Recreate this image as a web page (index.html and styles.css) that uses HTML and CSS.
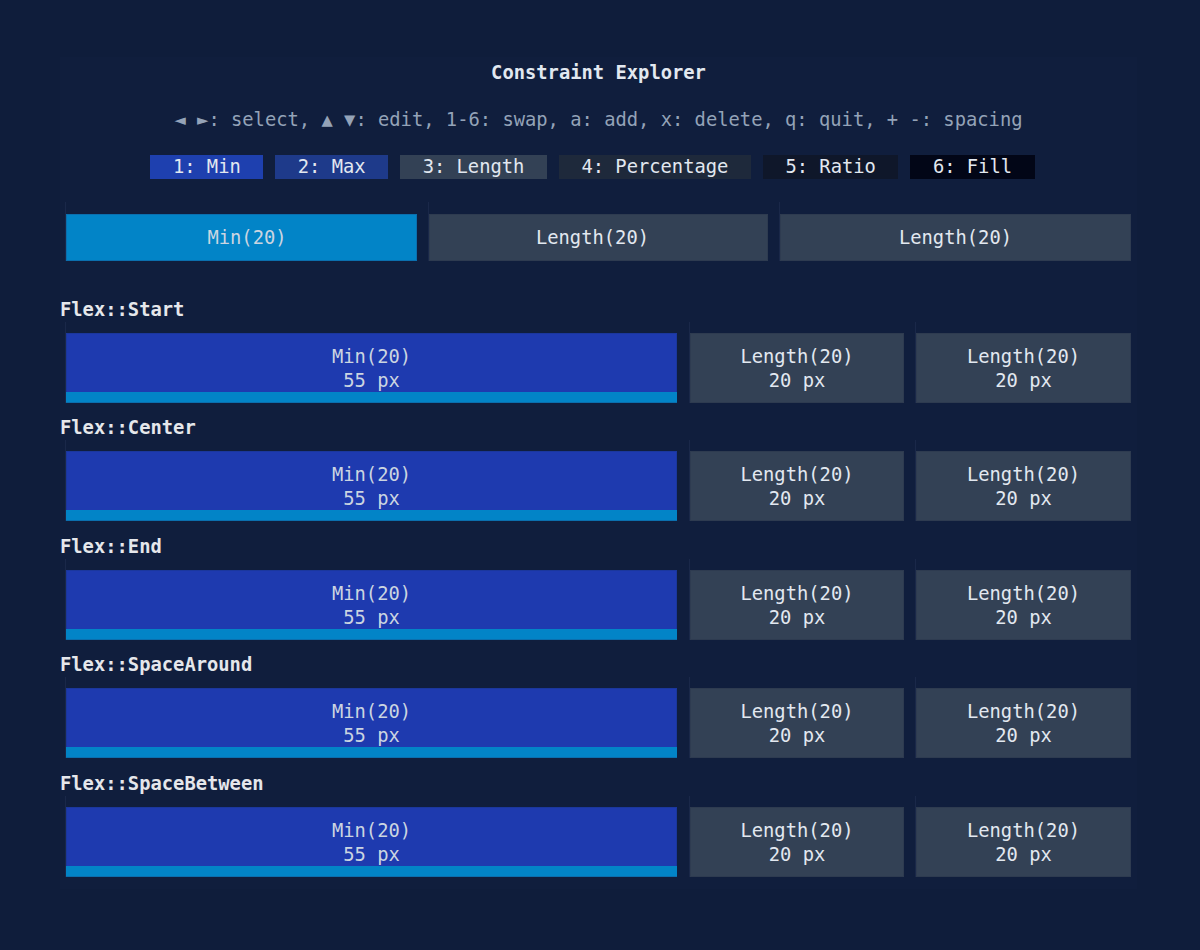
FILE: index.html
```html
<!DOCTYPE html>
<html lang="en">
<head>
<meta charset="utf-8">
<title>Constraint Explorer</title>
<link rel="stylesheet" href="styles.css">
</head>
<body>
<div class="panel">
  <div class="title">Constraint Explorer</div>
  <div class="help">◄ ►: select, ▲ ▼: edit, 1-6: swap, a: add, x: delete, q: quit, + -: spacing</div>
  <div class="badges">
    <span class="badge b-min">1: Min</span>
    <span class="badge b-max">2: Max</span>
    <span class="badge b-len">3: Length</span>
    <span class="badge b-pct">4: Percentage</span>
    <span class="badge b-ratio">5: Ratio</span>
    <span class="badge b-fill">6: Fill</span>
  </div>

  <div class="tabs">
    <div class="cell c-wide"><div class="tab tab-sel">Min(20)</div></div>
    <div class="cell c-mid"><div class="tab tab-mid">Length(20)</div></div>
    <div class="cell c-wide"><div class="tab">Length(20)</div></div>
  </div>

  <div class="flexes">
    <section class="flex-sec">
      <div class="label">Flex::Start</div>
      <div class="row">
        <div class="cell r-big"><div class="blk blk-min"><span>Min(20)</span><span>55 px</span><i class="strip"></i></div></div>
        <div class="cell r-a"><div class="blk blk-len"><span>Length(20)</span><span>20 px</span></div></div>
        <div class="cell r-b"><div class="blk blk-len"><span>Length(20)</span><span>20 px</span></div></div>
      </div>
    </section>
    <section class="flex-sec">
      <div class="label">Flex::Center</div>
      <div class="row">
        <div class="cell r-big"><div class="blk blk-min"><span>Min(20)</span><span>55 px</span><i class="strip"></i></div></div>
        <div class="cell r-a"><div class="blk blk-len"><span>Length(20)</span><span>20 px</span></div></div>
        <div class="cell r-b"><div class="blk blk-len"><span>Length(20)</span><span>20 px</span></div></div>
      </div>
    </section>
    <section class="flex-sec">
      <div class="label">Flex::End</div>
      <div class="row">
        <div class="cell r-big"><div class="blk blk-min"><span>Min(20)</span><span>55 px</span><i class="strip"></i></div></div>
        <div class="cell r-a"><div class="blk blk-len"><span>Length(20)</span><span>20 px</span></div></div>
        <div class="cell r-b"><div class="blk blk-len"><span>Length(20)</span><span>20 px</span></div></div>
      </div>
    </section>
    <section class="flex-sec">
      <div class="label">Flex::SpaceAround</div>
      <div class="row">
        <div class="cell r-big"><div class="blk blk-min"><span>Min(20)</span><span>55 px</span><i class="strip"></i></div></div>
        <div class="cell r-a"><div class="blk blk-len"><span>Length(20)</span><span>20 px</span></div></div>
        <div class="cell r-b"><div class="blk blk-len"><span>Length(20)</span><span>20 px</span></div></div>
      </div>
    </section>
    <section class="flex-sec">
      <div class="label">Flex::SpaceBetween</div>
      <div class="row">
        <div class="cell r-big"><div class="blk blk-min"><span>Min(20)</span><span>55 px</span><i class="strip"></i></div></div>
        <div class="cell r-a"><div class="blk blk-len"><span>Length(20)</span><span>20 px</span></div></div>
        <div class="cell r-b"><div class="blk blk-len"><span>Length(20)</span><span>20 px</span></div></div>
      </div>
    </section>
  </div>
</div>
</body>
</html>
```

FILE: styles.css
```css
html, body {
  margin: 0;
  padding: 0;
  background: #0f1d3b;
}

body {
  font-family: "DejaVu Sans Mono", "Liberation Mono", monospace;
  font-size: 18.8px;
  line-height: 24px;
  color: #e2e8f0;
  height: 950px;
}

.panel {
  margin: 57px 0 0 60px;
  width: 1077px;
  padding: 4px 0 12px 0;
  background: #101e3d;
  display: flex;
  flex-direction: column;
}

.title {
  text-align: center;
  font-weight: bold;
  height: 24px;
  color: #e2e8f0;
}

.help {
  margin-top: 23px;
  text-align: center;
  color: #94a3b8;
  height: 24px;
}

.badges {
  margin-top: 23px;
  display: flex;
  justify-content: center;
  padding-right: 12px;
  gap: 12px;
}

.badge {
  display: block;
  height: 23.5px;
  line-height: 23.5px;
  padding: 0 22.5px;
  color: #e2e8f0;
}

.b-min { background: #1e40af; }
.b-max { background: #1e3a8a; }
.b-len { background: #334155; }
.b-pct { background: #1e293b; }
.b-ratio { background: #0f172a; }
.b-fill { background: #020617; }

.tabs {
  margin: 23px 0 0 5px;
  display: flex;
  gap: 11px;
}

.cell {
  border-left: 1px solid #1a2849;
  padding-top: 12px;
  box-sizing: border-box;
}

.c-wide { width: 352px; }
.c-mid { width: 340px; }

.tab {
  height: 47px;
  line-height: 47px;
  text-align: center;
  background: #334155;
  color: #e2e8f0;
  box-shadow: inset 0 0 0 1px #2e3b50;
}

.tab-sel {
  background: #0284c7;
  color: #cbd5e1;
  box-shadow: inset 0 0 0 1px #0b6fae;
  padding-left: 11px;
}

.tab-mid {
  padding-right: 12px;
}

.flexes {
  margin-top: 37px;
  display: flex;
  flex-direction: column;
  gap: 13.6px;
}

.label {
  font-weight: bold;
  height: 24px;
  color: #e5e7eb;
}

.row {
  margin-left: 5px;
  display: flex;
}

.row .cell { padding-top: 11px; }

.r-big { width: 612px; margin-right: 12px; }
.r-a { width: 215px; margin-right: 11px; }
.r-b { width: 216px; }

.blk {
  position: relative;
  height: 70px;
  box-sizing: border-box;
  padding-top: 12px;
  display: flex;
  flex-direction: column;
  align-items: center;
}

.blk span {
  display: block;
  height: 24px;
  line-height: 24px;
  position: relative;
  z-index: 1;
}

.blk-min {
  background: #1e3aaf;
  color: #cbd5e1;
  box-shadow: inset 0 0 0 1px #1b379d;
}

.blk-len {
  background: #334155;
  color: #e2e8f0;
  box-shadow: inset 0 0 0 1px #2e3b50;
}

.strip {
  position: absolute;
  left: 0;
  right: 0;
  bottom: 0;
  height: 11px;
  background: #0284c7;
  box-shadow: inset 0 -1px 0 #0b6fae;
}
```
